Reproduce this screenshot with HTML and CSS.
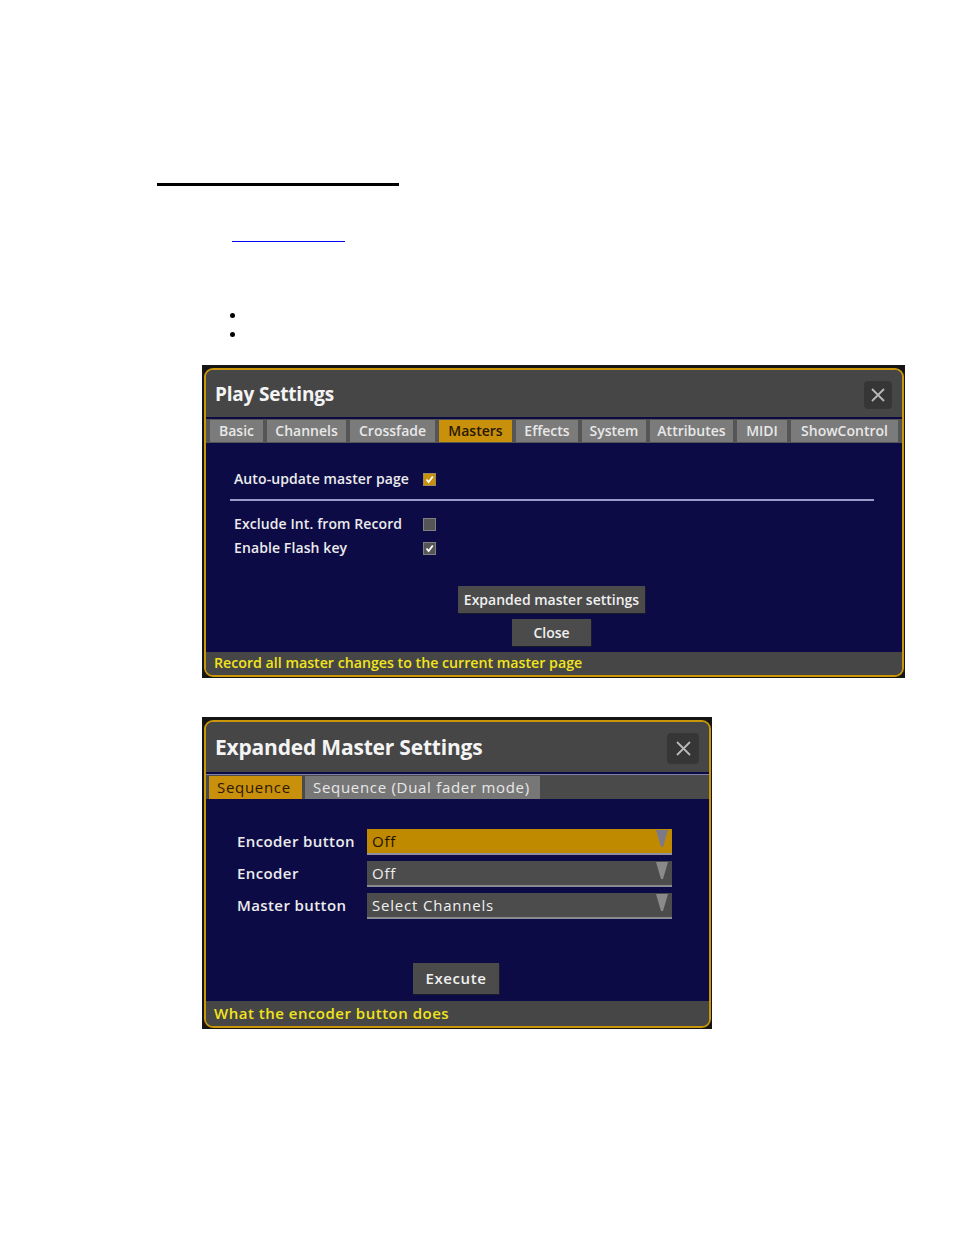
FILE: index.html
```html
<!DOCTYPE html>
<html>
<head>
<meta charset="utf-8">
<link rel="stylesheet" href="styles.css">
</head>
<body>
<div class="page">
  <div class="rule"></div>
  <div class="link"></div>
  <ul class="bullets"><li></li><li></li></ul>

  <div class="shot shot1">
    <div class="win">
      <div class="titlebar">
        <span class="title">Play Settings</span>
        <span class="closebtn"><svg width="14" height="14" viewBox="0 0 14 14"><path d="M1 1 L13 13 M13 1 L1 13" stroke="#b8b8b8" stroke-width="1.8"/></svg></span>
      </div>
      <div class="tabs">
        <span class="tab w-basic">Basic</span>
        <span class="tab w-chan">Channels</span>
        <span class="tab w-cross">Crossfade</span>
        <span class="tab active w-mast">Masters</span>
        <span class="tab w-eff">Effects</span>
        <span class="tab w-sys">System</span>
        <span class="tab w-attr">Attributes</span>
        <span class="tab w-midi">MIDI</span>
        <span class="tab w-show">ShowControl</span>
      </div>
      <div class="body body1">
        <div class="row first"><span class="lbl">Auto-update master page</span><span class="cb gold"><svg width="9" height="9" viewBox="0 0 9 9"><path d="M1.5 4.5 L3.6 7 L7.8 1.5" stroke="#fff" stroke-width="1.8" fill="none"/></svg></span></div>
        <div class="sep"></div>
        <div class="row r2"><span class="lbl">Exclude Int. from Record</span><span class="cb grey"></span></div>
        <div class="row r3"><span class="lbl">Enable Flash key</span><span class="cb grey"><svg width="9" height="9" viewBox="0 0 9 9"><path d="M1.5 4.5 L3.6 7 L7.8 1.5" stroke="#fff" stroke-width="1.8" fill="none"/></svg></span></div>
        <div class="btns">
          <span class="btn b-exp">Expanded master settings</span>
          <span class="btn b-close">Close</span>
        </div>
      </div>
      <div class="footer">Record all master changes to the current master page</div>
    </div>
  </div>

  <div class="shot shot2">
    <div class="win">
      <div class="titlebar tb2">
        <span class="title t2">Expanded Master Settings</span>
        <span class="closebtn c2"><svg width="15" height="15" viewBox="0 0 15 15"><path d="M1 1 L14 14 M14 1 L1 14" stroke="#b8b8b8" stroke-width="1.8"/></svg></span>
      </div>
      <div class="tabs2">
        <span class="tab2 active">Sequence</span>
        <span class="tab2 grey2">Sequence (Dual fader mode)</span>
      </div>
      <div class="body body2">
        <div class="frow"><span class="flbl">Encoder button</span><span class="dd ddgold"><span>Off</span><svg class="arr" width="12" height="18" viewBox="0 0 12 18"><polygon points="0,0 12,0 7,17 5,17" fill="#7a7a8a"/></svg></span></div>
        <div class="frow"><span class="flbl">Encoder</span><span class="dd"><span>Off</span><svg class="arr" width="12" height="18" viewBox="0 0 12 18"><polygon points="0,0 12,0 7,17 5,17" fill="#8a8a8a"/></svg></span></div>
        <div class="frow"><span class="flbl">Master button</span><span class="dd"><span>Select Channels</span><svg class="arr" width="12" height="18" viewBox="0 0 12 18"><polygon points="0,0 12,0 7,17 5,17" fill="#8a8a8a"/></svg></span></div>
        <div class="btns2"><span class="btn b-exec">Execute</span></div>
      </div>
      <div class="footer f2">What the encoder button does</div>
    </div>
  </div>
</div>
</body>
</html>
```

FILE: styles.css
```css
html, body {
  margin: 0;
  padding: 0;
  background: #fff;
}
.page {
  width: 954px;
  height: 1235px;
  overflow: hidden;
  font-family: "Open Sans", "DejaVu Sans", sans-serif;
}
.rule {
  margin-left: 157px;
  margin-top: 183px;
  width: 242px;
  height: 3px;
  background: #000;
}
.link {
  margin-left: 232px;
  margin-top: 55px;
  width: 113px;
  height: 1px;
  background: #0000ff;
}
.bullets {
  list-style: none;
  margin: 71px 0 0 230px;
  padding: 0;
}
.bullets li {
  width: 5px;
  height: 5px;
  border-radius: 50%;
  background: #000;
}
.bullets li + li {
  margin-top: 14px;
}
.shot {
  margin-left: 202px;
  background: #151515;
  padding: 3px 1px 1px 2px;
  box-sizing: border-box;
}
.shot1 {
  margin-top: 28px;
  width: 703px;
  height: 313px;
}
.shot2 {
  margin-top: 39px;
  width: 510px;
  height: 312px;
}
.win {
  height: 100%;
  box-sizing: border-box;
  border: 2px solid #c89608;
  border-radius: 9px;
  background: #464646;
  overflow: hidden;
  display: flex;
  flex-direction: column;
}
.titlebar {
  height: 47px;
  flex: none;
  display: flex;
  align-items: center;
  justify-content: space-between;
  padding: 0 10px 0 9px;
  background: #464646;
  border-bottom: 2px solid #0c0b46;
}
.title {
  color: #f4f4f4;
  font-weight: 700;
  font-size: 19px;
  letter-spacing: -0.2px;
}
.closebtn {
  width: 28px;
  height: 28px;
  border-radius: 4px;
  background: #363636;
  display: flex;
  align-items: center;
  justify-content: center;
  margin-top: 2px;
}
.tabs {
  display: flex;
  gap: 4px;
  background: #555;
  padding: 1px 3px 1px 4px;
  height: 22px;
  flex: none;
}
.tab {
  background: #7b7b7b;
  color: #e8e8e8;
  font-size: 14px;
  font-weight: 600;
  line-height: 22px;
  text-align: center;
  box-sizing: border-box;
  white-space: nowrap;
}
.tab.active {
  background: #c9900c;
  color: #2a1800;
}
.w-basic { width: 53px; }
.w-chan { width: 79px; }
.w-cross { width: 85px; }
.w-mast { width: 73px; }
.w-eff { width: 62px; }
.w-sys { width: 64px; }
.w-attr { width: 83px; }
.w-midi { width: 50px; }
.w-show { width: 107px; }
.body {
  flex: 1;
  background: #0c0b46;
  color: #ececec;
}
.body1 {
  padding: 25px 0 0 28px;
}
.row {
  display: flex;
  align-items: center;
  height: 20px;
  font-size: 14px;
  font-weight: 600;
  letter-spacing: 0.1px;
}
.lbl {
  width: 189px;
}
.cb {
  width: 13px;
  height: 13px;
  box-sizing: border-box;
  display: flex;
  align-items: center;
  justify-content: center;
  margin-top: 2px;
}
.cb.gold {
  background: #c9900c;
  border: 1px solid #9a8a60;
}
.cb.grey {
  background: #555;
  border: 1px solid #808080;
}
.sep {
  margin: 11px 0 12px -4px;
  width: 644px;
  height: 2px;
  background: #9c9ccc;
}
.r3 {
  margin-top: 4px;
}
.btns {
  display: flex;
  flex-direction: column;
  align-items: center;
  gap: 6px;
  margin-top: 29px;
  margin-left: -33px;
}
.btn {
  background: #4b4b4b;
  color: #f0f0f0;
  font-size: 14px;
  font-weight: 600;
  height: 27px;
  line-height: 27px;
  text-align: center;
  box-shadow: 1px 1px 0 #1a1a2a;
}
.b-exp { width: 187px; }
.b-close { width: 79px; }
.footer {
  height: 23px;
  flex: none;
  color: #f2e41c;
  font-size: 14.2px;
  font-weight: 600;
  line-height: 22px;
  padding-left: 8px;
  background: #464646;
}
.tb2 {
  height: 50px;
  border-bottom: 2px solid #0c0b46;
}
.t2 {
  font-size: 21px;
}
.c2 {
  width: 32px;
  height: 31px;
}
.tabs2 {
  display: flex;
  gap: 3px;
  height: 23px;
  flex: none;
  background: #4a4a4a;
  padding: 1px 3px 0 3px;
  border-top: 1px solid #8080a8;
}
.tab2 {
  font-size: 15px;
  letter-spacing: 0.7px;
  line-height: 23px;
  padding: 0 8px;
  color: #e8e8e8;
  white-space: nowrap;
}
.tab2.active {
  background: #c9900c;
  color: #2a1800;
  width: 93px;
  box-sizing: border-box;
}
.tab2.grey2 {
  background: #777;
  width: 235px;
  box-sizing: border-box;
}
.body2 {
  padding: 30px 0 0 31px;
}
.frow {
  display: flex;
  align-items: center;
  height: 26px;
  margin-bottom: 6px;
}
.flbl {
  width: 130px;
  font-size: 15px;
  font-weight: 600;
  letter-spacing: 0.4px;
  color: #ececec;
  margin-top: -3px;
}
.dd {
  width: 305px;
  height: 26px;
  box-sizing: border-box;
  background: #4c4c4c;
  border-bottom: 2px solid #8a8a90;
  display: flex;
  align-items: center;
  justify-content: space-between;
  padding: 0 4px 0 5px;
  font-size: 15px;
  letter-spacing: 0.8px;
  color: #f0f0f0;
}
.dd.ddgold {
  background: #c08a00;
  color: #1c1200;
  border-bottom-color: #9090a0;
}
.arr {
  margin-top: -4px;
}
.btns2 {
  display: flex;
  justify-content: center;
  margin-top: 44px;
  margin-left: -34px;
}
.b-exec {
  width: 86px;
  height: 31px;
  line-height: 31px;
  font-size: 15px;
  letter-spacing: 0.6px;
}
.f2 {
  height: 25px;
  line-height: 25px;
  font-size: 15px;
  letter-spacing: 0.5px;
}
```
